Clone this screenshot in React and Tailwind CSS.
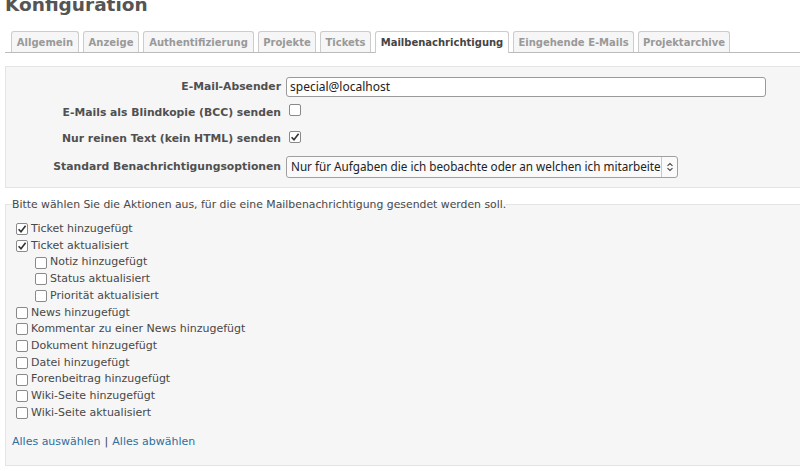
import React from "react";

const tabs = [
  ["Allgemein", "w-[68px]"],
  ["Anzeige", "w-[56px]"],
  ["Authentifizierung", "w-[111px]"],
  ["Projekte", "w-[58px]"],
  ["Tickets", "w-[51px]"],
  ["Mailbenachrichtigung", "w-[134px]"],
  ["Eingehende E-Mails", "w-[121px]"],
  ["Projektarchive", "w-[92px]"],
];

function Box({ checked }) {
  return (
    <span className="inline-flex w-[12px] h-[12px] shrink-0 items-center justify-center rounded-[2px] border border-[#8a8a8a] bg-white">
      {checked ? (
        <svg width="10" height="10" viewBox="0 0 10 10">
          <path d="M1.6 5.2 L4 7.8 L8.6 1.8" fill="none" stroke="#333" strokeWidth="1.6" />
        </svg>
      ) : null}
    </span>
  );
}

const items = [
  ["Ticket hinzugefügt", true, false],
  ["Ticket aktualisiert", true, false],
  ["Notiz hinzugefügt", false, true],
  ["Status aktualisiert", false, true],
  ["Priorität aktualisiert", false, true],
  ["News hinzugefügt", false, false],
  ["Kommentar zu einer News hinzugefügt", false, false],
  ["Dokument hinzugefügt", false, false],
  ["Datei hinzugefügt", false, false],
  ["Forenbeitrag hinzugefügt", false, false],
  ["Wiki-Seite hinzugefügt", false, false],
  ["Wiki-Seite aktualisiert", false, false],
];

export default function App() {
  return (
    <div
      className="w-[800px] h-[471px] overflow-hidden bg-white pl-[5px] text-[11px] text-[#484848]"
      style={{ fontFamily: '"DejaVu Sans", Verdana, sans-serif' }}
    >
      <h2 className="mt-[-6px] text-[18.5px] font-bold leading-[22px] text-[#555]">Konfiguration</h2>

      <div className="mt-[15px] flex gap-[4px] border-b border-[#bbb] pl-[6px]">
        {tabs.map(([t, w]) => {
          const active = t === "Mailbenachrichtigung";
          return (
            <div
              key={t}
              className={
                (active
                  ? "mb-[-1px] h-[22px] bg-white text-[#444] "
                  : "h-[21px] bg-[#f6f6f6] text-[#999] ") +
                "flex shrink-0 justify-center whitespace-nowrap rounded-t-[3px] border border-b-0 border-[#ccc] pt-[5px] text-[10px] font-bold leading-[12px] " +
                w
              }
            >
              {t}
            </div>
          );
        })}
      </div>

      <div className="mt-[13px] border border-r-0 border-[#e4e4e4] bg-[#f6f6f6] pt-[7px] pb-[7px] text-[10.8px] font-bold text-[#505050]">
        <div className="flex h-[26px] items-center">
          <div className="w-[280px] pr-[5px] text-right">E-Mail-Absender</div>
          <div
            className="flex h-[20px] w-[480px] items-center rounded-[3px] border border-[#9a9a9a] bg-white pl-[3px] text-[12px] font-normal text-[#222]"
            style={{ fontFamily: '"Noto Sans", sans-serif' }}
          >
            special@localhost
          </div>
        </div>
        <div className="flex h-[26px] items-center">
          <div className="w-[280px] pr-[5px] text-right">E-Mails als Blindkopie (BCC) senden</div>
          <span className="ml-[3px]"><Box checked={false} /></span>
        </div>
        <div className="flex h-[26px] items-center">
          <div className="w-[280px] pr-[5px] text-right">Nur reinen Text (kein HTML) senden</div>
          <span className="ml-[3px]"><Box checked={true} /></span>
        </div>
        <div className="mt-[2px] flex h-[26px] items-center">
          <div className="w-[280px] pr-[5px] text-right">Standard Benachrichtigungsoptionen</div>
          <div
            className="flex h-[22px] w-[392px] items-center rounded-[3px] border border-[#a0a0a0] bg-[#fafafa] text-[11.7px] font-normal text-[#222]"
            style={{ fontFamily: '"Noto Sans", sans-serif' }}
          >
            <span className="flex-1 overflow-hidden whitespace-nowrap pl-[4px]">
              Nur für Aufgaben die ich beobachte oder an welchen ich mitarbeite
            </span>
            <span className="flex h-full w-[16px] items-center justify-center border-l border-[#c8c8c8]">
              <svg width="8" height="10" viewBox="0 0 8 10">
                <path d="M1.5 3.8 L4 1.5 L6.5 3.8 M1.5 6.2 L4 8.5 L6.5 6.2" fill="none" stroke="#444" strokeWidth="1.1" />
              </svg>
            </span>
          </div>
        </div>
      </div>

      <fieldset className="mt-[10px] h-[268px] border border-r-0 border-[#e4e4e4] bg-[#f6f6f6] pl-[6px]">
        <legend className="text-[10.85px] font-normal leading-[13px] text-[#484848]">
          Bitte wählen Sie die Aktionen aus, für die eine Mailbenachrichtigung gesendet werden soll.
        </legend>
        <div className="pt-[10px]">
          {items.map(([label, checked, indent]) => (
            <div
              key={label}
              className={
                indent
                  ? "flex h-[16.7px] items-center gap-[3px] pl-[23px]"
                  : "flex h-[16.7px] items-center gap-[3px] pl-[4px]"
              }
            >
              <Box checked={checked} />
              <span>{label}</span>
            </div>
          ))}
        </div>
        <div className="mt-[12px] flex h-[17px] items-center text-[#2d6f9e]">
          <span>Alles auswählen</span>
          <span className="px-[4px] text-[#484848]">|</span>
          <span>Alles abwählen</span>
        </div>
      </fieldset>
    </div>
  );
}
